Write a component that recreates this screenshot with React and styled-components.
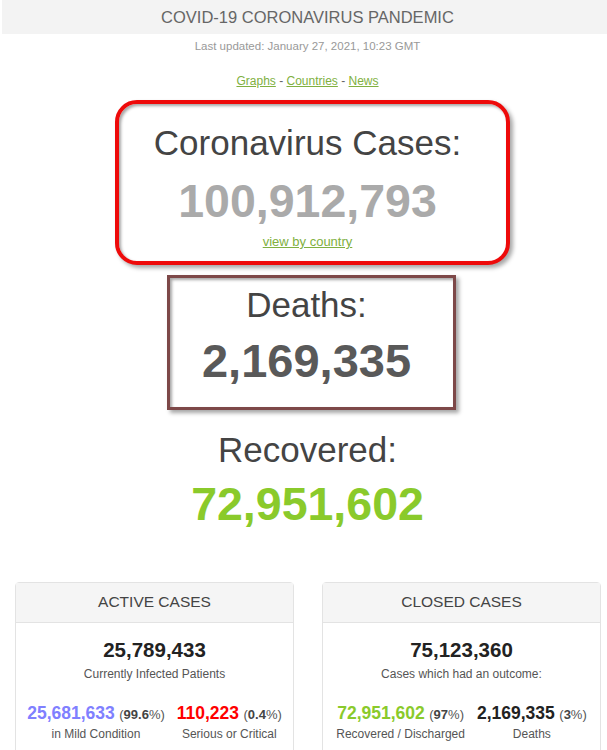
import React from "react";
import styled, { createGlobalStyle } from "styled-components";

const Global = createGlobalStyle`
  html, body { margin: 0; padding: 0; background: #fff; }
  body { font-family: "Liberation Sans", Arial, sans-serif; }
  * { box-sizing: border-box; }
`;

const Page = styled.div`
  width: 607px;
  overflow: hidden;
`;

const TopBar = styled.div`
  height: 34px;
  line-height: 34px;
  margin-left: 2px;
  background: #f3f3f3;
  color: #666;
  font-size: 16.5px;
  text-align: center;
  padding-left: 6px;
`;

const Column = styled.div`
  display: flex;
  flex-direction: column;
  align-items: center;
  padding-left: 8px;
`;

const Updated = styled.div`
  margin-top: 5px;
  font-size: 11.5px;
  line-height: 14px;
  color: #999;
`;

const Links = styled.div`
  margin-top: 20.5px;
  font-size: 12px;
  line-height: 15px;
  color: #666;
`;

const Link = styled.a`
  color: #80b040;
  text-decoration: underline;
`;

const HighlightBox = styled.div`
  display: flex;
  flex-direction: column;
  align-items: center;
  width: ${(p) => p.$w}px;
  height: ${(p) => p.$h}px;
  margin-top: ${(p) => p.$mt}px;
  margin-left: ${(p) => p.$ml}px;
  padding-top: ${(p) => p.$pt}px;
  padding-right: 10px;
  border: ${(p) => p.$bw}px solid ${(p) => p.$color};
  border-radius: ${(p) => p.$radius}px;
  box-shadow: inset 2px 2px 3px rgba(0, 0, 0, 0.35),
    3px 3px 4px rgba(0, 0, 0, 0.35);
  background: #fff;
`;

const BigLabel = styled.div`
  font-size: 35px;
  line-height: 40px;
  color: #444;
  margin-top: ${(p) => p.$mt || 0}px;
`;

const BigNumber = styled.div`
  font-size: ${(p) => p.$size}px;
  font-weight: bold;
  line-height: 52px;
  color: ${(p) => p.$color};
  margin-top: ${(p) => p.$mt}px;
`;

const SmallLink = styled.a`
  margin-top: 7px;
  font-size: 13px;
  line-height: 16px;
  color: #80b040;
  text-decoration: underline;
`;

const Cards = styled.div`
  display: grid;
  grid-template-columns: 1fr 1fr;
  gap: 28px;
  margin-top: 52px;
  padding: 0 6px 0 15px;
`;

const Card = styled.div`
  border: 1px solid #e3e3e3;
  border-radius: 4px;
  height: 200px;
`;

const CardHead = styled.div`
  height: 40px;
  line-height: 38px;
  background: #f5f5f5;
  border-bottom: 1px solid #e3e3e3;
  text-align: center;
  font-size: 15.5px;
  color: #444;
`;

const CardBody = styled.div`
  display: flex;
  flex-direction: column;
  align-items: center;
  padding-top: 15px;
`;

const Total = styled.div`
  font-size: 20.5px;
  font-weight: bold;
  line-height: 24px;
  color: #222;
`;

const Caption = styled.div`
  font-size: 12px;
  line-height: 16px;
  color: #555;
  margin-top: ${(p) => p.$mt || 0}px;
`;

const SplitRow = styled.div`
  display: flex;
  justify-content: center;
  gap: 12px;
  margin-top: 20px;
`;

const Split = styled.div`
  display: flex;
  flex-direction: column;
  align-items: center;
`;

const SplitLine = styled.div`
  line-height: 22px;
  white-space: nowrap;
`;

const SplitNum = styled.span`
  font-size: 17.5px;
  font-weight: bold;
  color: ${(p) => p.$color};
`;

const Pct = styled.span`
  font-size: 13px;
  color: #555;
  b { color: #444; }
`;

function SplitItem({ num, color, pct, label }) {
  return (
    <Split>
      <SplitLine>
        <SplitNum $color={color}>{num}</SplitNum>{" "}
        <Pct>
          (<b>{pct}</b>%)
        </Pct>
      </SplitLine>
      <Caption>{label}</Caption>
    </Split>
  );
}

export default function App() {
  return (
    <Page>
      <Global />
      <TopBar>COVID-19 CORONAVIRUS PANDEMIC</TopBar>
      <Column>
        <Updated>Last updated: January 27, 2021, 10:23 GMT</Updated>
        <Links>
          <Link href="#">Graphs</Link> - <Link href="#">Countries</Link> -{" "}
          <Link href="#">News</Link>
        </Links>
        <HighlightBox
          $w={395}
          $h={165}
          $mt={11.5}
          $ml={10}
          $pt={19}
          $bw={4}
          $color="#ee0a0a"
          $radius={22}
        >
          <BigLabel>Coronavirus Cases:</BigLabel>
          <BigNumber $size={46.5} $color="#aaa" $mt={12}>
            100,912,793
          </BigNumber>
          <SmallLink href="#">view by country</SmallLink>
        </HighlightBox>
        <HighlightBox
          $w={289}
          $h={135}
          $mt={10}
          $ml={8}
          $pt={7}
          $bw={3}
          $color="#7d4848"
          $radius={0}
        >
          <BigLabel>Deaths:</BigLabel>
          <BigNumber $size={47} $color="#595959" $mt={9.6}>
            2,169,335
          </BigNumber>
        </HighlightBox>
        <BigLabel $mt={20}>Recovered:</BigLabel>
        <BigNumber $size={46.5} $color="#8aca2b" $mt={8}>
          72,951,602
        </BigNumber>
      </Column>
      <Cards>
        <Card>
          <CardHead>ACTIVE CASES</CardHead>
          <CardBody>
            <Total>25,789,433</Total>
            <Caption $mt={3.5}>Currently Infected Patients</Caption>
            <SplitRow>
              <SplitItem num="25,681,633" color="#8080ff" pct="99.6" label="in Mild Condition" />
              <SplitItem num="110,223" color="#ff0000" pct="0.4" label="Serious or Critical" />
            </SplitRow>
          </CardBody>
        </Card>
        <Card>
          <CardHead>CLOSED CASES</CardHead>
          <CardBody>
            <Total>75,123,360</Total>
            <Caption $mt={3.5}>Cases which had an outcome:</Caption>
            <SplitRow>
              <SplitItem num="72,951,602" color="#8aca2b" pct="97" label="Recovered / Discharged" />
              <SplitItem num="2,169,335" color="#222" pct="3" label="Deaths" />
            </SplitRow>
          </CardBody>
        </Card>
      </Cards>
    </Page>
  );
}
